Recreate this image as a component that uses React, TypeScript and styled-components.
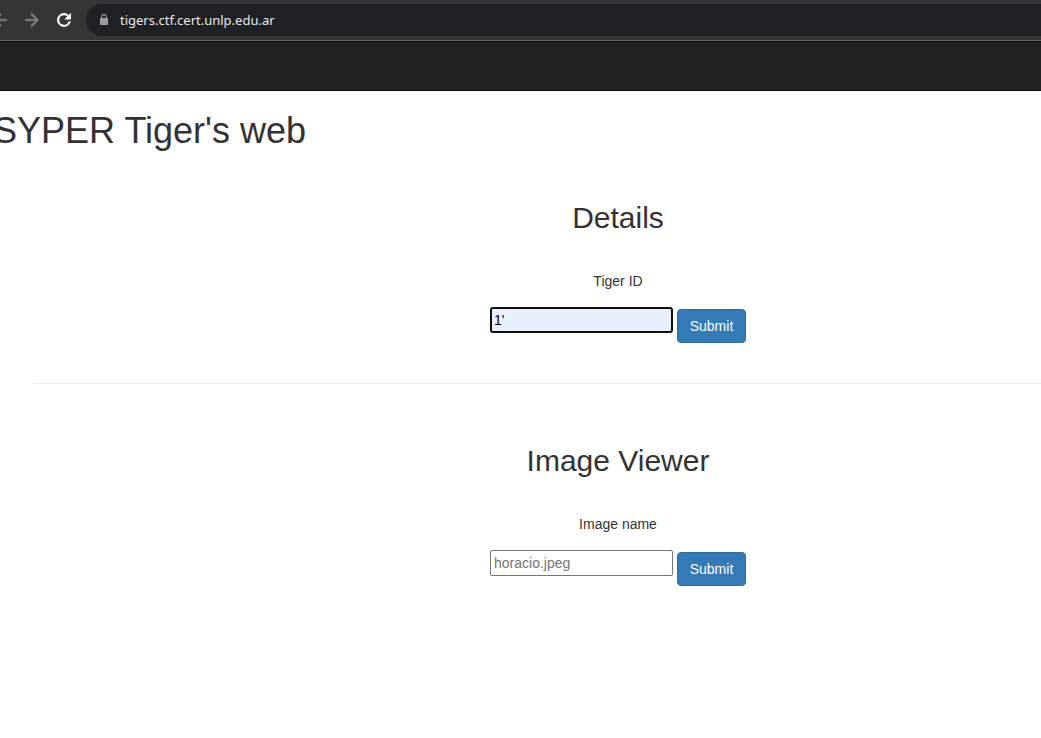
import React from "react";
import styled, { createGlobalStyle } from "styled-components";

const GlobalStyle = createGlobalStyle`
  * { box-sizing: border-box; }
  html { height: 100%; }
  body {
    margin: 0;
    overflow: hidden;
    background: #fff;
    color: #333;
    font: 14px/20px "Liberation Sans", Arial, sans-serif;
  }
`;

const BrowserBar = styled.header`
  display: flex;
  align-items: center;
  height: 41px;
  background: #353535;
  border-bottom: 1px solid #636363;
`;

const BrowserButtons = styled.div`
  display: flex;
  gap: 12px;
  margin-left: -10px;
`;

const IconButton = styled.button<{ $active?: boolean }>`
  width: 20px;
  height: 20px;
  padding: 0;
  border: 0;
  background: none;
  color: ${(p) => (p.$active ? "#fff" : "#868686")};

  svg {
    display: block;
    fill: currentColor;
    stroke: currentColor;
    stroke-width: ${(p) => (p.$active ? "0.7" : "0.5")};
  }
`;

const AddressBar = styled.label`
  display: flex;
  flex: 1;
  align-items: center;
  gap: 10px;
  height: 32px;
  margin-left: 12px;
  margin-right: -20px;
  padding-left: 12px;
  border-radius: 16px;
  background: #202124;
`;

const AddressInput = styled.input`
  flex: 1;
  min-width: 0;
  padding: 0;
  border: 0;
  outline: 0;
  background: none;
  color: #e8eaed;
  font: 13px/20px "Noto Sans", sans-serif;
`;

const SiteNav = styled.nav`
  height: 50px;
  background: #222;
  border: solid #080808;
  border-width: 1px 0;
`;

const PageTitle = styled.h1`
  margin: 20px 0 0 -7px;
  font-size: 36px;
  font-weight: 500;
  line-height: 40px;
  white-space: nowrap;
`;

/* The centred container runs past the right side of the window. */
const Content = styled.main`
  margin: 50px -162px 0 33px;
`;

const FormSection = styled.section`
  text-align: center;
`;

const SectionTitle = styled.h2`
  margin: 0 0 37px;
  font-size: 30px;
  font-weight: 500;
  line-height: 33px;
`;

const FieldLabel = styled.label`
  display: block;
  margin-bottom: 16px;
`;

const FieldRow = styled.div`
  display: flex;
  justify-content: center;
  align-items: flex-start;
  gap: 4px;
`;

const TextInput = styled.input<{ $focused?: boolean }>`
  width: 183px;
  height: 26px;
  padding: ${(p) => (p.$focused ? "0 2px" : "1px 3px")};
  border: ${(p) => (p.$focused ? "2px solid #101010" : "1px solid #767676")};
  border-radius: ${(p) => (p.$focused ? "3px" : "2px")};
  outline: 0;
  background: ${(p) => (p.$focused ? "#e8f0fe" : "#fff")};
  color: #000;
  font: inherit;

  &::placeholder {
    color: #757575;
    opacity: 1;
  }
`;

const SubmitButton = styled.button`
  width: 69px;
  height: 34px;
  margin-top: 2px;
  padding: 0;
  border: 1px solid #2e6da4;
  border-radius: 4px;
  background: #337ab7;
  color: #fff;
  font: inherit;
`;

const Divider = styled.hr`
  margin: 40px 0 60px;
  border: 0;
  border-top: 1px solid #eee;
`;

type ToolIconProps = { path: string };

function ToolIcon({ path }: ToolIconProps) {
  return (
    <svg width="20" height="20" viewBox="0 0 24 24" aria-hidden="true">
      <path d={path} />
    </svg>
  );
}

const icons = {
  back: "M20 11H7.83l5.59-5.59L12 4l-8 8 8 8 1.41-1.41L7.83 13H20v-2z",
  forward: "M12 4l-1.41 1.41L16.17 11H4v2h12.17l-5.58 5.59L12 20l8-8z",
  reload:
    "M17.65 6.35A7.96 7.96 0 0 0 12 4a8 8 0 1 0 7.73 10h-2.08A6 6 0 1 1 12 6c1.66 0 3.14.69 4.22 1.78L13 11h7V4l-2.35 2.35z",
};

type TigerFormProps = {
  title: string;
  label: string;
  id: string;
  value?: string;
  placeholder?: string;
  focused?: boolean;
};

function TigerForm({ title, label, id, value, placeholder, focused }: TigerFormProps) {
  return (
    <FormSection>
      <SectionTitle>{title}</SectionTitle>
      <form onSubmit={(e) => e.preventDefault()}>
        <FieldLabel htmlFor={id}>{label}</FieldLabel>
        <FieldRow>
          <TextInput
            id={id}
            type="text"
            defaultValue={value}
            placeholder={placeholder}
            $focused={focused}
          />
          <SubmitButton type="submit">Submit</SubmitButton>
        </FieldRow>
      </form>
    </FormSection>
  );
}

export default function App() {
  return (
    <>
      <GlobalStyle />
      <BrowserBar>
        <BrowserButtons>
          <IconButton type="button" aria-label="Back">
            <ToolIcon path={icons.back} />
          </IconButton>
          <IconButton type="button" aria-label="Forward">
            <ToolIcon path={icons.forward} />
          </IconButton>
          <IconButton type="button" aria-label="Reload" $active>
            <ToolIcon path={icons.reload} />
          </IconButton>
        </BrowserButtons>
        <AddressBar>
          <svg width="12" height="12" viewBox="0 0 12 12" aria-hidden="true">
            <rect x="2" y="4" width="8" height="7" rx="1" fill="#9aa0a6" />
            <path d="M3.6 4.5V2.8a2.4 2.4 0 0 1 4.8 0v1.7" fill="none" stroke="#9aa0a6" strokeWidth="1.1" />
          </svg>
          <AddressInput type="text" aria-label="Address" defaultValue="tigers.ctf.cert.unlp.edu.ar" />
        </AddressBar>
      </BrowserBar>
      <SiteNav />
      <PageTitle>SYPER Tiger's web</PageTitle>
      <Content>
        <TigerForm title="Details" label="Tiger ID" id="tiger-id" value="1'" focused />
        <Divider />
        <TigerForm title="Image Viewer" label="Image name" id="image-name" placeholder="horacio.jpeg" />
      </Content>
    </>
  );
}
